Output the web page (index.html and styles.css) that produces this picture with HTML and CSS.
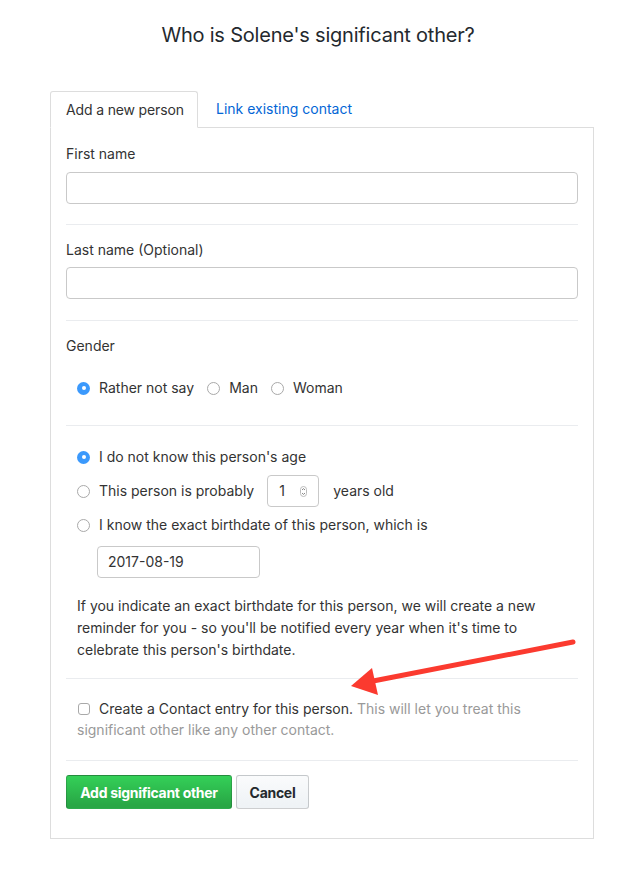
FILE: index.html
```html
<!DOCTYPE html>
<html>
<head>
<meta charset="utf-8">
<link rel="stylesheet" href="styles.css">
</head>
<body>
<div class="page">
  <h2 class="title">Who is Solene's significant other?</h2>
  <div class="card-wrap">
    <div class="tabs">
      <div class="tab tab-active">Add a new person</div>
      <div class="tab tab-link">Link existing contact</div>
    </div>
    <div class="panel">
      <div class="section s1">
        <div class="label">First name</div>
        <div class="input"></div>
      </div>
      <div class="section s2">
        <div class="label">Last name (Optional)</div>
        <div class="input"></div>
      </div>
      <div class="section s3">
        <div class="label">Gender</div>
        <div class="radio-inline">
          <label class="opt"><span class="radio checked"></span>Rather not say</label>
          <label class="opt"><span class="radio"></span>Man</label>
          <label class="opt"><span class="radio"></span>Woman</label>
        </div>
      </div>
      <div class="section s4">
        <div class="indent">
          <div class="row r1"><span class="radio checked"></span>I do not know this person's age</div>
          <div class="row r2"><span class="radio"></span>This person is probably
            <span class="num"><span class="num-val">1</span><span class="spin"><svg width="7" height="11" viewBox="0 0 7 11"><rect x="0.5" y="0.5" width="6" height="10" rx="3" fill="none" stroke="#bbb"/><path d="M2 4 L3.5 2.6 L5 4 M2 7 L3.5 8.4 L5 7" fill="none" stroke="#777" stroke-width="0.9"/></svg></span></span>
            years old</div>
          <div class="row r3"><span class="radio"></span>I know the exact birthdate of this person, which is</div>
          <div class="date">2017-08-19</div>
          <p class="help">If you indicate an exact birthdate for this person, we will create a new reminder for you - so you'll be notified every year when it's time to celebrate this person's birthdate.</p>
        </div>
      </div>
      <div class="section s5">
        <p class="check-line"><span class="checkbox"></span>Create a Contact entry for this person. <span class="muted">This will let you treat this significant other like any other contact.</span></p>
      </div>
      <div class="section s6">
        <button class="btn btn-green">Add significant other</button>
        <button class="btn btn-plain">Cancel</button>
      </div>
    </div>
  </div>
</div>
<svg class="arrow" width="636" height="883" viewBox="0 0 636 883">
  <line x1="573" y1="642" x2="368" y2="682" stroke="#fb3a2f" stroke-width="5" stroke-linecap="round"/>
  <polygon points="351,686 372,668 378,695" fill="#fb3a2f"/>
</svg>
</body>
</html>
```

FILE: styles.css
```css
html, body {
  margin: 0;
  padding: 0;
  background: #fff;
}
body {
  font-family: Inter, "Liberation Sans", sans-serif;
  font-size: 14px;
  color: #333;
  position: relative;
  width: 636px;
  height: 883px;
  overflow: hidden;
}
.page {
  padding-top: 22px;
}
.title {
  margin: 0 0 43px 0;
  text-align: center;
  font-size: 20px;
  font-weight: 400;
  line-height: 26px;
  color: #24292e;
  letter-spacing: -0.2px;
}
.card-wrap {
  margin-left: 50px;
  width: 544px;
}
.tabs {
  display: flex;
  height: 37px;
  position: relative;
  z-index: 1;
  margin-bottom: -1px;
}
.tab {
  line-height: 36px;
  box-sizing: border-box;
  height: 37px;
  white-space: nowrap;
}
.tab-active {
  border: 1px solid #ddd;
  border-bottom: 1px solid #fff;
  border-radius: 3px 3px 0 0;
  background: #fff;
  width: 148px;
  padding-left: 15px;
  color: #333;
  letter-spacing: -0.15px;
}
.tab-link {
  color: #0366d6;
  padding-left: 18px;
}
.panel {
  border: 1px solid #ddd;
  padding: 0 15px;
}
.section {
  border-bottom: 1px solid #eaecef;
}
.label {
  line-height: 20px;
}
.input {
  height: 32px;
  box-sizing: border-box;
  border: 1px solid #c9c9c9;
  border-radius: 4px;
  background: #fff;
}
.s1 { padding: 16px 0 20px; }
.s1 .label { margin-bottom: 8px; }
.s2 { padding: 15px 0 21px; }
.s2 .label { margin-bottom: 7px; }
.s3 { padding: 15px 0 27px; }
.radio-inline {
  display: flex;
  margin-top: 22px;
  padding-left: 11px;
  line-height: 20px;
}
.opt {
  display: flex;
  align-items: center;
  margin-right: 13px;
}
.radio {
  display: inline-block;
  width: 13px;
  height: 13px;
  box-sizing: border-box;
  border-radius: 50%;
  border: 1px solid #a9a9a9;
  background: #fff;
  margin-right: 9px;
  flex: none;
  position: relative;
}
.radio.checked {
  border: none;
  background: #3b99fc;
}
.radio.checked::after {
  content: "";
  position: absolute;
  left: 4.5px;
  top: 4.5px;
  width: 4px;
  height: 4px;
  border-radius: 50%;
  background: #fff;
}
.s4 { padding: 21px 0 17px; }
.indent {
  padding-left: 11px;
}
.row {
  display: flex;
  align-items: center;
  line-height: 20px;
}
.r1 { height: 20px; }
.r2 { height: 32px; margin-top: 8px; }
.r3 { height: 20px; margin-top: 8px; }
.num {
  display: inline-flex;
  align-items: center;
  width: 52px;
  height: 32px;
  box-sizing: border-box;
  border: 1px solid #c9c9c9;
  border-radius: 4px;
  margin: 0 14px 0 13px;
  padding-left: 11px;
}
.num-val {
  width: 21px;
}
.spin {
  display: inline-flex;
}
.date {
  margin: 11px 0 0 20px;
  width: 163px;
  height: 32px;
  box-sizing: border-box;
  border: 1px solid #c9c9c9;
  border-radius: 4px;
  line-height: 30px;
  padding-left: 10px;
  color: #333;
}
.help {
  margin: 17px 0 0;
  line-height: 22px;
  width: 460px;
}
.s5 { padding: 19px 0 20px; }
.check-line {
  margin: 0;
  padding-left: 11px;
  line-height: 21px;
}
.checkbox {
  display: inline-block;
  width: 12px;
  height: 12px;
  box-sizing: border-box;
  border: 1px solid #a9a9a9;
  border-radius: 3px;
  vertical-align: -1px;
  margin: 0 9px 0 1px;
}
.muted {
  color: #999;
}
.s6 {
  border-bottom: none;
  padding: 14px 0 29px;
  display: flex;
  gap: 4px;
}
.btn {
  font-family: Inter, "Liberation Sans", sans-serif;
  font-size: 14px;
  font-weight: 700;
  height: 34px;
  border-radius: 3px;
  padding: 0;
  white-space: nowrap;
  letter-spacing: -0.3px;
  cursor: pointer;
}
.btn-green {
  color: #fff;
  background: linear-gradient(#34d058, #28a745 90%);
  border: 1px solid rgba(27,31,35,0.2);
  width: 166px;
}
.btn-plain {
  color: #24292e;
  background: linear-gradient(#fafbfc, #eff3f6 90%);
  border: 1px solid rgba(27,31,35,0.2);
  width: 73px;
}
.arrow {
  position: absolute;
  left: 0;
  top: 0;
  pointer-events: none;
}
```
